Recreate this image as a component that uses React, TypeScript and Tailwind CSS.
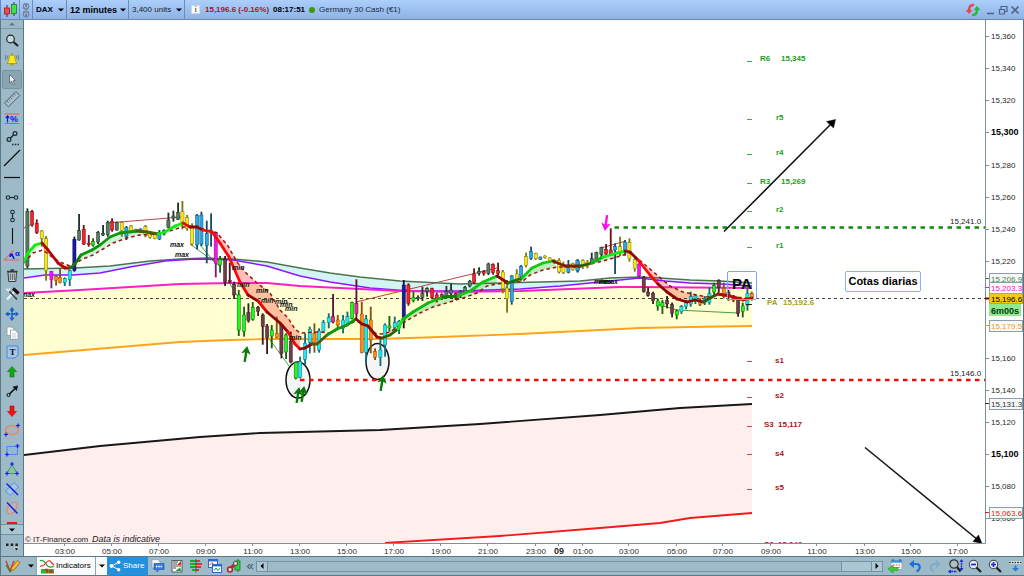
import React from "react";

type Point = [number, number];
type Candle = [number, number, number, number, number, string];

const candleColors: Record<string, { body: string; wick: string }> = {
  k: { body: "#587a62", wick: "#1d3526" },
  r: { body: "#f8202a", wick: "#6e1216" },
  y: { body: "#f4ea12", wick: "#7d7514" },
  m: { body: "#fb10f4", wick: "#7c1a76" },
  o: { body: "#ff8c12", wick: "#84500f" },
  c: { body: "#18eaf2", wick: "#126a74" },
  b: { body: "#2aa9ea", wick: "#174d6a" },
  n: { body: "#1a1aa8", wick: "#0c0c50" },
  g: { body: "#1df81d", wick: "#16620f" },
  w: { body: "#6d3d48", wick: "#3a1d24" },
  p: { body: "#d8368c", wick: "#5a1038" },
};

// Each session lists x, wick top, wick bottom, body top, body bottom in thirds of a unit from its origin.
const sessions: { origin: Point; candles: Candle[] }[] = [
  {
    origin: [20, 190],
    candles: [
      [22, 55, 235, 65, 228, "k"], [36, 60, 110, 64, 105, "r"], [50, 88, 132, 100, 128, "r"],
      [65, 120, 170, 123, 145, "y"], [78, 138, 272, 146, 242, "y"], [94, 243, 295, 245, 268, "m"],
      [108, 255, 287, 259, 272, "o"], [120, 235, 280, 262, 278, "o"], [134, 262, 288, 266, 278, "c"],
      [149, 240, 288, 242, 268, "c"], [163, 140, 245, 148, 242, "n"], [177, 72, 152, 122, 150, "k"],
      [191, 105, 165, 118, 162, "r"], [206, 135, 170, 160, 164, "r"], [219, 145, 170, 155, 165, "g"],
      [234, 123, 162, 128, 156, "k"], [249, 105, 138, 130, 135, "k"], [263, 92, 140, 98, 133, "k"],
      [276, 85, 125, 95, 120, "r"], [290, 95, 122, 98, 120, "k"], [305, 93, 140, 98, 122, "y"],
      [319, 108, 150, 112, 140, "b"], [333, 105, 130, 108, 125, "y"], [347, 116, 128, 118, 126, "y"],
      [361, 115, 128, 117, 126, "b"], [376, 105, 142, 110, 136, "y"], [390, 128, 146, 130, 142, "y"],
      [404, 128, 148, 133, 146, "y"], [418, 120, 150, 128, 147, "b"], [432, 118, 136, 122, 132, "b"],
      [445, 68, 115, 90, 112, "k"], [460, 62, 95, 78, 84, "k"], [474, 38, 90, 68, 88, "k"],
      [487, 33, 118, 65, 100, "y"], [501, 75, 122, 82, 115, "y"], [516, 100, 167, 108, 162, "y"],
      [531, 72, 178, 76, 165, "b"], [544, 65, 168, 75, 162, "b"], [560, 92, 220, 130, 166, "b"],
      [573, 70, 170, 120, 128, "b"], [587, 125, 262, 127, 220, "m"],
    ],
  },
  {
    origin: [200, 190],
    candles: [
      [60, 198, 248, 208, 225, "g"], [75, 198, 288, 208, 276, "w"], [89, 218, 280, 272, 276, "w"],
      [102, 275, 327, 283, 315, "w"], [116, 300, 438, 315, 420, "g"], [132, 350, 440, 375, 424, "g"],
      [145, 340, 398, 368, 392, "w"], [158, 336, 392, 352, 388, "g"], [174, 348, 378, 352, 364, "w"],
      [188, 370, 464, 375, 410, "w"], [201, 402, 492, 408, 442, "w"], [215, 405, 475, 420, 438, "g"],
      [230, 380, 445, 430, 442, "o"], [244, 400, 505, 404, 490, "w"], [258, 430, 507, 435, 486, "g"],
      [272, 425, 520, 455, 516, "w"], [287, 515, 568, 517, 564, "g"], [300, 500, 565, 515, 562, "c"],
      [315, 430, 524, 460, 508, "c"], [329, 410, 490, 418, 457, "c"], [343, 400, 488, 430, 464, "o"],
      [357, 415, 488, 423, 480, "c"], [370, 390, 428, 397, 424, "c"], [386, 370, 415, 383, 398, "c"],
      [399, 312, 400, 380, 396, "p"], [413, 375, 415, 390, 405, "o"], [429, 375, 430, 390, 415, "c"],
      [442, 365, 408, 380, 400, "c"], [456, 335, 388, 338, 385, "g"], [469, 268, 385, 340, 370, "p"],
      [485, 335, 490, 372, 488, "o"], [498, 375, 520, 387, 487, "c"], [512, 350, 490, 390, 450, "o"],
      [525, 475, 510, 484, 502, "o"], [541, 440, 528, 480, 502, "c"], [555, 400, 500, 405, 465, "c"],
      [568, 378, 425, 408, 414, "g"], [584, 380, 420, 398, 412, "c"],
    ],
  },
  {
    origin: [380, 210],
    candles: [
      [57, 330, 372, 334, 355, "c"], [71, 210, 355, 225, 328, "n"], [85, 220, 287, 225, 280, "r"],
      [100, 245, 277, 262, 272, "g"], [114, 256, 272, 262, 266, "k"], [127, 230, 273, 250, 262, "k"],
      [141, 232, 260, 236, 244, "k"], [156, 233, 268, 236, 262, "r"], [170, 248, 277, 255, 268, "r"],
      [185, 250, 270, 254, 264, "r"], [199, 228, 264, 244, 260, "k"], [213, 220, 264, 240, 250, "k"],
      [227, 247, 270, 250, 262, "r"], [241, 240, 264, 244, 256, "k"], [255, 228, 252, 232, 246, "k"],
      [269, 210, 232, 214, 228, "k"], [282, 175, 222, 192, 218, "r"], [297, 172, 197, 184, 190, "k"],
      [311, 180, 197, 184, 190, "r"], [325, 158, 195, 162, 190, "k"], [339, 160, 194, 164, 188, "r"],
      [354, 158, 197, 182, 190, "r"], [368, 180, 250, 186, 236, "y"], [381, 210, 308, 234, 266, "y"],
      [395, 195, 284, 198, 274, "b"], [410, 178, 217, 192, 210, "y"], [423, 165, 212, 169, 200, "b"],
      [438, 128, 172, 140, 166, "y"], [453, 110, 150, 124, 146, "b"], [467, 128, 150, 130, 146, "y"],
      [481, 140, 150, 141, 148, "b"], [495, 136, 146, 138, 143, "y"], [509, 142, 156, 144, 153, "y"],
      [523, 148, 162, 151, 158, "y"], [537, 145, 190, 151, 186, "y"], [550, 155, 192, 164, 188, "y"],
      [565, 150, 190, 165, 187, "b"], [578, 158, 182, 160, 178, "y"], [593, 148, 187, 155, 181, "b"],
    ],
  },
  {
    origin: [570, 200],
    candles: [
      [22, 178, 217, 182, 212, "b"], [38, 178, 207, 182, 200, "y"], [52, 180, 205, 186, 200, "y"],
      [65, 158, 192, 176, 188, "k"], [79, 155, 185, 158, 180, "k"], [94, 140, 177, 142, 164, "k"],
      [108, 132, 170, 148, 162, "r"], [122, 85, 168, 150, 166, "r"], [135, 130, 222, 140, 150, "b"],
      [150, 110, 168, 140, 160, "y"], [165, 120, 167, 126, 157, "b"], [178, 115, 185, 128, 176, "y"],
      [194, 175, 215, 178, 206, "y"], [207, 190, 232, 192, 228, "m"], [221, 228, 278, 232, 275, "w"],
      [234, 262, 290, 276, 286, "w"], [249, 275, 312, 280, 302, "w"], [263, 295, 332, 303, 318, "g"],
      [277, 300, 342, 308, 320, "g"], [291, 288, 325, 302, 312, "w"], [306, 308, 352, 314, 340, "w"],
      [320, 328, 358, 333, 345, "g"], [334, 315, 342, 320, 335, "c"], [348, 300, 328, 308, 320, "c"],
      [362, 275, 320, 290, 312, "c"], [376, 282, 312, 288, 302, "c"], [390, 295, 318, 300, 314, "o"],
      [404, 288, 315, 296, 308, "c"], [418, 262, 314, 280, 308, "c"], [432, 248, 290, 256, 276, "g"],
      [446, 238, 278, 242, 262, "w"], [461, 248, 295, 265, 290, "o"], [475, 270, 302, 276, 290, "w"],
      [490, 285, 306, 288, 300, "r"], [504, 295, 350, 300, 340, "w"], [518, 308, 352, 318, 334, "g"],
      [532, 262, 332, 280, 316, "c"], [545, 275, 302, 280, 296, "o"],
    ],
  },
];

const fastAverage: Point[] = [
  [24, 262], [28, 253], [35, 245], [42, 243], [48, 250], [58, 263], [65, 268], [70, 268], [75, 264], [81, 255],
  [92, 250], [100, 245], [110, 237], [120, 233], [137, 231], [147, 232], [158, 234], [165, 232], [175, 226],
  [183, 223], [190, 227], [197, 227], [203, 230], [212, 232], [220, 243], [229, 257], [240, 282], [248, 295],
  [258, 301], [267, 312], [280, 323], [288, 332], [295, 344], [300, 349], [305, 348], [312, 344], [317, 344],
  [327, 335], [337, 329], [347, 325], [356, 319], [362, 324], [368, 326], [377, 337], [382, 338], [390, 335],
  [398, 329], [403, 319], [413, 312], [428, 303], [443, 297], [458, 296], [470, 291], [483, 282], [497, 276],
  [508, 283], [522, 278], [532, 268], [543, 263], [553, 261], [565, 266], [580, 266], [592, 263], [603, 257],
  [617, 253], [625, 251], [630, 252], [638, 260], [650, 275], [658, 284], [667, 292], [677, 299], [687, 302],
  [695, 300], [703, 302], [712, 297], [718, 294], [730, 296], [737, 298], [743, 300], [752, 298],
];

const slowAverage: Point[] = [
  [24, 263], [33, 253], [43, 250], [52, 257], [60, 262], [70, 266], [83, 259], [93, 255], [103, 249], [113, 243],
  [127, 238], [140, 235], [160, 234], [173, 230], [182, 227], [193, 227], [207, 230], [217, 233], [228, 246],
  [237, 262], [245, 272], [257, 283], [270, 293], [280, 310], [288, 318], [295, 329], [300, 333], [317, 332],
  [330, 333], [347, 325], [356, 321], [368, 326], [375, 333], [382, 334], [390, 332], [403, 323], [420, 313],
  [433, 307], [453, 301], [463, 298], [477, 293], [487, 286], [497, 284], [508, 283], [523, 281], [530, 275],
  [543, 270], [557, 267], [580, 267], [590, 264], [603, 261], [617, 257], [630, 253], [643, 263], [657, 275],
  [670, 286], [683, 292], [697, 295], [707, 297], [720, 295], [752, 299],
];

// Colour of the fast average up to each x.
const averageColors: [number, string][] = [
  [42, "#10ee10"], [70, "#b00808"], [78, "#0c7a0c"], [140, "#0d960d"], [160, "#4d5a08"], [184, "#10ee10"],
  [192, "#ee0808"], [205, "#8c0606"], [248, "#fb0808"], [262, "#8c0606"], [270, "#e00808"], [286, "#8c0606"],
  [301, "#f00808"], [313, "#8c0606"], [322, "#4d5a08"], [356, "#0d960d"], [382, "#8c0606"], [399, "#2d5a08"],
  [406, "#10ee10"], [440, "#0cb80c"], [462, "#0c7a0c"], [497, "#10c810"], [513, "#8c0606"], [524, "#0c7a0c"],
  [555, "#10c810"], [580, "#7c1e06"], [592, "#2d5a08"], [608, "#0cb80c"], [627, "#10ee10"], [640, "#8c0606"],
  [662, "#fb0808"], [704, "#8c0606"], [722, "#2d5a08"], [752, "#b80808"],
];

const bands: [number, number, string][] = [
  [24, 42, "#bfeec4"], [42, 70, "#ffc9c9"], [70, 184, "#bfeec4"], [212, 302, "#ff6a5a"], [302, 322, "#ff6a5a"],
  [385, 497, "#a5e8a5"], [510, 557, "#a5e8a5"], [590, 630, "#a5e8a5"], [630, 708, "#ff6a5a"],
];

const trend: Point[] = [
  [24, 269], [75, 268], [110, 266], [150, 261], [180, 259], [206, 258], [233, 259], [267, 262], [300, 268],
  [330, 273], [360, 277], [400, 281], [420, 282], [460, 284], [500, 283], [540, 282], [580, 281], [610, 278],
  [640, 277], [660, 278], [690, 280], [720, 281], [752, 283],
];
const purple: Point[] = [
  [24, 278], [45, 275], [73, 275], [100, 273], [130, 267], [165, 261], [195, 259], [233, 260], [267, 266],
  [300, 276], [330, 282], [370, 288], [410, 291], [460, 291], [520, 289], [560, 286], [590, 283], [610, 281],
  [640, 278], [665, 281], [690, 283], [720, 284], [752, 286],
];
const magenta: Point[] = [
  [24, 293], [80, 290], [130, 287], [180, 284], [230, 283], [267, 283], [300, 286], [360, 289], [400, 291],
  [460, 292], [520, 291], [570, 289], [620, 287], [640, 287], [752, 288],
];
const orange: Point[] = [
  [24, 355], [60, 352], [120, 347], [180, 342], [230, 340], [267, 339], [380, 339], [440, 337], [520, 334],
  [580, 331], [640, 328], [690, 327], [752, 326],
];
const black: Point[] = [
  [24, 455], [100, 446], [200, 437], [260, 433], [380, 430], [480, 424], [600, 415], [680, 408], [752, 404],
];
const red: Point[] = [[385, 543], [500, 536], [600, 528], [660, 523], [690, 518], [752, 513]];

const join = (points: Point[]) => points.map((p) => p.join(",")).join(" ");
const between = (a: Point[], b: Point[]) => join([...a, ...[...b].reverse()]);
const inside = (points: Point[], from: number, to: number) => points.filter(([x]) => x >= from && x <= to);
const priceY = (price: number) => 454 - (price - 15100) * 1.6077;

const prices = [15360, 15340, 15320, 15300, 15280, 15260, 15240, 15220, 15160, 15140, 15120, 15100, 15080, 15060];
const times: [number, string][] = [
  [65, "03:00"], [112, "05:00"], [159, "07:00"], [206, "09:00"], [253, "11:00"], [300, "13:00"], [347, "15:00"],
  [394, "17:00"], [441, "19:00"], [488, "21:00"], [536, "23:00"], [559, "09"], [583, "01:00"], [629, "03:00"],
  [677, "05:00"], [723, "07:00"], [771, "09:00"], [817, "11:00"], [865, "13:00"], [911, "15:00"], [958, "17:00"],
];

const levels: { y: number; name: string; x: number; value?: string; vx?: number; up: boolean; tick: number }[] = [
  { y: 61, name: "R6", x: 760, value: "15,345", vx: 781, up: true, tick: 62 },
  { y: 120, name: "r5", x: 776, up: true, tick: 120 },
  { y: 155, name: "r4", x: 776, up: true, tick: 155 },
  { y: 184, name: "R3", x: 760, value: "15,269", vx: 781, up: true, tick: 184 },
  { y: 212, name: "r2", x: 776, up: true, tick: 212 },
  { y: 248, name: "r1", x: 776, up: true, tick: 248 },
  { y: 363, name: "s1", x: 775, up: false, tick: 362 },
  { y: 398, name: "s2", x: 775, up: false, tick: 398 },
  { y: 427, name: "S3", x: 764, value: "15,117", vx: 778, up: false, tick: 427 },
  { y: 456, name: "s4", x: 775, up: false, tick: 455 },
  { y: 490, name: "s5", x: 775, up: false, tick: 490 },
  { y: 547, name: "S6", x: 764, value: "15,042", vx: 778, up: false, tick: 546 },
];

const tags = [
  { y: 279, text: "15,206.9", color: "#4f7a4f" },
  { y: 288, text: "15,203.3", color: "#f018c8" },
  { y: 326, text: "15,179.5", color: "#f59b12" },
  { y: 404, text: "15,131.3", color: "#333333" },
  { y: 513, text: "15,063.6", color: "#f02020" },
];

const minMarks: Point[] = [[232, 270], [237, 287], [256, 293], [261, 303], [275, 304], [280, 307], [285, 311], [289, 340]];

function Mark({ x, y, color = "#0a7a0a", flip = false }: { x: number; y: number; color?: string; flip?: boolean }) {
  return (
    <g transform={`translate(${x} ${y}) rotate(${flip ? 188 : 9})`} stroke={color} fill={color}>
      <path d="M0 3V15" strokeWidth="2.4" />
      <path d="M0 0L-3.6 6L0 4.6L3.6 6Z" strokeWidth="1" />
    </g>
  );
}

function Chart() {
  return (
    <svg viewBox="24 20 1000 536" className="block h-full w-full" role="img" aria-label="DAX 12 minutes chart" fontFamily="'Liberation Sans', Arial, sans-serif">
      <defs>
        <clipPath id="plot"><rect x="24" y="20" width="961" height="523" /></clipPath>
      </defs>
      <rect x="24" y="20" width="1000" height="536" fill="#fff" />
      <g clipPath="url(#plot)">
        <polygon points={between(magenta, orange)} fill="#ffffd2" />
        <polygon points={between(trend, purple)} fill="#d3f4f4" />
        <polygon points={between(black, [[24, 543], ...red])} fill="#ffeeee" />
        {bands.map(([from, to, fill]) => (
          <polygon key={from} points={between(inside(fastAverage, from, to), inside(slowAverage, from, to))} fill={fill} fillOpacity={fill === "#ff6a5a" ? 0.42 : 0.75} />
        ))}
        <path d="M24 298.5H985" stroke="#444" strokeDasharray="3 3" strokeWidth="1" />
        <g fill="none">
          <path d="M24 228L30 225M107 223L182 217M356 302L497 268M601 248L626 241" stroke="#b53030" strokeWidth=".9" />
          <path d="M190 244L220 266M200 245L217 265M230 284L240 300M267 336L298 378M658 304L676 310L738 313" stroke="#2a9a2a" strokeWidth=".9" />
          <polyline points={join(trend)} stroke="#4c744c" strokeWidth="1.5" />
          <polyline points={join(purple)} stroke="#8d16ff" strokeWidth="1.6" />
          <polyline points={join(magenta)} stroke="#fb1fc4" strokeWidth="1.8" />
          <polyline points={join(orange)} stroke="#ffa31a" strokeWidth="1.8" />
          <polyline points={join(black)} stroke="#181818" strokeWidth="1.8" />
          <polyline points={join(red)} stroke="#f21a1a" strokeWidth="1.8" />
        </g>
        <g fill="#f5f5f5" stroke="#111" strokeWidth="1.5">
          <ellipse cx="298" cy="380" rx="12" ry="18" />
          <ellipse cx="377.5" cy="361.5" rx="11.5" ry="18" />
        </g>
        {sessions.map(({ origin: [ox, oy], candles }) => (
          <g key={ox} transform={`translate(${ox} ${oy}) scale(${1 / 3})`}>
            {candles.map(([x, top, bottom, open, close, color]) => (
              <g key={x}>
                <rect x={x - 2.5} y={top} width="5.5" height={bottom - top} fill={candleColors[color].wick} />
                <rect x={x - 4.5} y={open} width="9.5" height={close - open} fill={candleColors[color].body} stroke={candleColors[color].wick} strokeWidth="1.5" />
              </g>
            ))}
          </g>
        ))}
        <polyline points={join(slowAverage)} fill="none" stroke="#9c1414" strokeWidth="1.5" strokeDasharray="3.5 3" />
        <g strokeWidth="2.8" strokeLinecap="round">
          {fastAverage.slice(1).map(([x, y], i) => {
            const [px, py] = fastAverage[i];
            const hit = averageColors.find(([end]) => (x + px) / 2 <= end);
            return <line key={x} x1={px} y1={py} x2={x} y2={y} stroke={hit ? hit[1] : "#b80808"} />;
          })}
        </g>
        <path d="M614.5 227.5H985" stroke="#128a12" strokeWidth="2.4" strokeDasharray="4.5 4.5" />
        <path d="M300 380H985" stroke="#f00c0c" strokeWidth="2.4" strokeDasharray="4.5 4.5" />
        <Mark x={247} y={347} />
        <Mark x={299} y={388} />
        <Mark x={304} y={387} />
        <Mark x={383} y={376} />
        <Mark x={605} y={230} color="#fb10e8" flip />
        <g fontSize="7" fontWeight="700" fontStyle="italic" fill="#111">
          {minMarks.map(([x, y]) => <text key={`${x}-${y}`} x={x} y={y}>min</text>)}
          <text x="170" y="247">max</text>
          <text x="175" y="257">max</text>
          <text x="21" y="297">max</text>
          <text x="594" y="284">min</text>
          <text x="599" y="284">max</text>
          <text x="604" y="284">max</text>
        </g>
        <g fontSize="8" fontWeight="700">
          {levels.map(({ y, name, x, value, vx, up, tick }) => (
            <g key={name} fill={up ? "#22a022" : "#a81818"}>
              <text x={x} y={y}>{name}</text>
              {value && <text x={vx} y={y}>{value}</text>}
              <path d={`M747 ${tick - 0.5}H752`} stroke={up ? "#3fae4f" : "#c05050"} strokeWidth="1" />
            </g>
          ))}
          <text x="767" y="305" fill="#a8a012">PA</text>
          <text x="783" y="305" fill="#a8a012">15,192.6</text>
        </g>
        <rect x="727.5" y="271.5" width="29" height="28" rx="1.5" fill="none" stroke="#7da5ff" />
        <text x="732" y="289" fontSize="15" fontWeight="700" fill="#000">PA</text>
        <path d="M746 304.5H752" stroke="#222" />
        <rect x="845.5" y="271.5" width="75" height="20" rx="1.5" fill="#fff" stroke="#8aaeff" />
        <text x="883" y="285" fontSize="11" fontWeight="700" textAnchor="middle" fill="#000">Cotas diarias</text>
        <g stroke="#111" strokeWidth="1.5" fill="#000">
          <path d="M724 231.5L832 123" />
          <path d="M835.5 119.5L826.5 121.5L833.5 128Z" strokeWidth=".5" />
          <path d="M865 447.5L978 540" />
          <path d="M982 543.5L978.5 535L973 541.5Z" strokeWidth=".5" />
        </g>
        <g fontSize="8" fill="#222">
          <text x="950" y="224">15,241.0</text>
          <text x="950" y="376">15,146.0</text>
          <text x="25" y="542">© IT-Finance.com</text>
          <text x="92" y="542" fontSize="9" fontStyle="italic">Data is indicative</text>
        </g>
      </g>
      <path d="M985.5 20V543.5H24" fill="none" stroke="#7d929c" />
      <g fontSize="8" fill="#2a2a2a">
        {prices.map((price) => {
          const y = Math.round(priceY(price));
          const strong = price % 100 === 0;
          return (
            <g key={price}>
              <path d={`M985 ${y + 0.5}H989`} stroke="#7d929c" />
              <text x="991" y={y + 3} fontSize={strong ? 9 : 8} fontWeight={strong ? 700 : 400} fill={strong ? "#000" : "#2a2a2a"}>
                {price.toLocaleString("en-US")}
              </text>
            </g>
          );
        })}
        {times.map(([x, label]) => (
          <g key={x}>
            <path d={`M${x - 0.5} 543V546`} stroke="#7d929c" />
            <text x={x} y="554" textAnchor="middle" fontWeight={label === "09" ? 700 : 400} fontSize={label === "09" ? 9 : 8}>{label}</text>
          </g>
        ))}
        {tags.map(({ y, text, color }) => (
          <g key={text}>
            <path d={`M985 ${y - 0.5}H989`} stroke={color} />
            <rect x="989.5" y={y - 5.5} width="33" height="11" fill="#f6f8f8" stroke="#8c9ea6" />
            <text x="991" y={y + 3} fill={color}>{text}</text>
          </g>
        ))}
        <path d="M985 298.5H989" stroke="#700" strokeWidth="2" />
        <rect x="989.5" y="293.5" width="33" height="10" fill="#f7c61a" stroke="#d6a514" />
        <text x="991" y="302" fill="#000">15,196.6</text>
        <rect x="989" y="304" width="32" height="12" fill="#8fe98f" />
        <text x="991" y="314" fontSize="9" fontWeight="700" fill="#0c3a0c">6m00s</text>
      </g>
      <path d="M1023.5 20V556" stroke="#56707e" />
    </svg>
  );
}

function Plus({ x, y }: { x: number; y: number }) {
  return <path d={`M${x - 2} ${y}H${x + 2}M${x} ${y - 2}V${y + 2}`} stroke="#1a1af0" strokeWidth="1.2" />;
}

const ink = "#1c2a32";
const tools: { name: string; icon: React.ReactNode }[] = [
  { name: "Zoom", icon: <><circle cx="6.5" cy="6" r="3.8" stroke="#222" strokeWidth="1.2" fill="#c4d8e0" /><path d="M9.5 9L14 13" stroke="#222" strokeWidth="2.2" /></> },
  { name: "Alerts", icon: <><path d="M8 3C5 3 5 6 4.8 8.5L3 11.5H13L11.2 8.5C11 6 11 3 8 3Z" fill="#ffe81c" stroke="#a58a08" strokeWidth=".7" /><path d="M6.5 12.5H9.5" stroke="#c09a08" strokeWidth="2" /><path d="M8 1.5V3" stroke="#a58a08" strokeWidth="1.5" /><path d="M2 3Q.5 5.5 1.8 8M14 3Q15.5 5.5 14.2 8M4 3.5Q2.6 5 3.5 7M12 3.5Q13.4 5 12.5 7" stroke="#5b6f7a" strokeWidth=".8" /></> },
  { name: "Select", icon: <path d="M5.5 2.5L5.5 11L7.6 9.2L9 12.8L10.5 12.2L9.1 8.8L11.6 8.5Z" fill="#e8eef2" stroke="#5d6f78" strokeWidth=".9" /> },
  { name: "Ruler", icon: <g transform="rotate(-45 8 8)"><rect x="0" y="5.5" width="16" height="5.5" fill="#a9bfca" stroke="#4d606a" strokeWidth=".9" /><path d="M3 5.5V8M5.5 5.5V7.5M8 5.5V8M10.5 5.5V7.5M13 5.5V8" stroke="#4d606a" strokeWidth=".8" /></g> },
  { name: "Percent", icon: <><path d="M.5 3H15.500M.5 12.500H15.5" stroke="#ff5050" strokeWidth="1" /><path d="M3.5 11.5V5.500M1.8 7L3.5 5L5.2 7" stroke="#1515ee" strokeWidth="1.2" /><text x="6" y="11" fontSize="9" fontWeight="700" fill="#1515ee" fontFamily="'Liberation Sans', sans-serif">%</text></> },
  { name: "Segment", icon: <><circle cx="5" cy="9.5" r="1.9" stroke={ink} strokeWidth="1.2" /><circle cx="11" cy="3.5" r="1.9" stroke={ink} strokeWidth="1.2" /><path d="M6.4 8.1L9.6 4.9" stroke={ink} strokeWidth="1.4" /><path d="M8 14.5H15" stroke={ink} strokeWidth="1.3" strokeDasharray="1.5 1.3" /></> },
  { name: "Line", icon: <path d="M0 16L16 0" stroke="#111" strokeWidth="1.2" /> },
  { name: "Horizontal line", icon: <path d="M0 8.5H16" stroke="#111" strokeWidth="1.2" /> },
  { name: "Horizontal segment", icon: <><circle cx="4" cy="8.5" r="1.8" stroke={ink} strokeWidth="1.1" /><circle cx="12" cy="8.5" r="1.8" stroke={ink} strokeWidth="1.1" /><path d="M6 8.5H10" stroke={ink} strokeWidth="1.2" /></> },
  { name: "Vertical segment", icon: <><circle cx="8.5" cy="4" r="1.8" stroke={ink} strokeWidth="1.1" /><circle cx="8.5" cy="12" r="1.8" stroke={ink} strokeWidth="1.1" /><path d="M8.5 6V10" stroke={ink} strokeWidth="1.2" /></> },
  { name: "Vertical line", icon: <path d="M8.5 0V16" stroke="#111" strokeWidth="1.1" /> },
  { name: "Angle", icon: <><path d="M9.5 3L.5 13H15.5" stroke="#f06060" strokeWidth="1.1" /><path d="M6.5 7.5Q9.500 8.500 10 12M6.200 7.300H9M6.200 7.300V10" stroke="#1515ee" strokeWidth="1.5" /><text x="11" y="9" fontSize="8" fontWeight="700" fill="#1515ee" fontFamily="'Liberation Sans', sans-serif">α</text></> },
  { name: "Delete", icon: <><path d="M4 5H12.5L11.8 14.5H4.7Z" fill="#c7d3d9" stroke="#323d43" /><path d="M3 4.5H13.500M6.5 3H10" stroke="#323d43" strokeWidth="1.3" /><path d="M6.3 6.5V13M8.3 6.5V13M10.3 6.5V13" stroke="#323d43" strokeWidth=".8" /></> },
  { name: "Settings", icon: <><path d="M3 13.5L11.5 4.5" stroke="#eef2f4" strokeWidth="2.4" /><path d="M4 4L13 13.5" stroke="#3b454b" strokeWidth="1.7" /><path d="M9 2.5L14.5 7.5" stroke="#111" strokeWidth="3.4" /><path d="M2 2.5L4.5 5L6 2.5" stroke="#e8edf0" strokeWidth="1.6" /></> },
  { name: "Move", icon: <><path d="M8 4V12M4 8H12" stroke="#1560c8" strokeWidth="2" strokeDasharray="2 .6" /><path d="M8 1L10.6 4.500H5.4ZM8 15L5.4 11.500H10.6ZM1 8L4.500 5.4V10.6ZM15 8L11.500 10.6V5.4Z" fill="#1560c8" /></> },
  { name: "Copy", icon: <><path d="M3 2H8L10 4V10.5H3Z" fill="#fff" stroke="#8999a2" strokeWidth=".8" /><path d="M6.5 5H11L14 8V14.5H6.5Z" fill="#fff" stroke="#8999a2" strokeWidth=".8" /><path d="M8 9H12M8 11H12M8 13H12" stroke="#aab6bd" strokeWidth=".7" /></> },
  { name: "Text", icon: <><path d="M3 2H14V11L11 14H3Z" fill="#a5c8e8" stroke="#4a86ea" /><text x="8.5" y="11" textAnchor="middle" fontSize="9" fontWeight="700" fill="#111" fontFamily="'Liberation Serif', serif">T</text></> },
  { name: "Up arrow", icon: <path d="M8 2.5L12.5 7.5H10V13H6V7.5H3.500Z" fill="#12a812" stroke="#0b770b" strokeWidth=".6" /> },
  { name: "Arrow", icon: <><circle cx="4.5" cy="12" r="1.6" stroke="#111" /><path d="M5.5 11L11 5.5" stroke="#111" strokeWidth="1.6" /><path d="M14 2.5L12.8 8L8.5 3.8Z" fill="#111" /></> },
  { name: "Down arrow", icon: <path d="M8 13.5L12.5 8.5H10V3H6V8.5H3.500Z" fill="#f51212" stroke="#b00c0c" strokeWidth=".6" /> },
  { name: "Ellipse", icon: <><ellipse cx="8" cy="8" rx="6.5" ry="4.5" fill="#adb3b4" stroke="#ee8055" strokeWidth="1.2" /><Plus x={14} y={3.5} /><Plus x={2} y={12.5} /></> },
  { name: "Rectangle", icon: <><rect x="3" y="4.5" width="10.5" height="8" fill="#92b9da" stroke="#4b85ef" /><Plus x={13.5} y={4} /><Plus x={3} y={12.5} /></> },
  { name: "Triangle", icon: <><path d="M8 3.5L13 12.5H3Z" fill="#96bcaf" stroke="#2fa552" /><Plus x={8} y={3} /><Plus x={3} y={12.5} /><Plus x={13} y={12.5} /></> },
  { name: "Parallel", icon: <><path d="M10 1.500L14.500 6L10 10.500L5.500 6ZM6 5.500L10.500 10L6 14.500L1.500 10Z" stroke="#4b85ef" strokeWidth=".9" fill="#a5c6df" /><path d="M2.5 2.5L14 14" stroke="#1a1af0" strokeWidth="1.4" /></> },
  { name: "Cycle", icon: <><ellipse cx="8" cy="8" rx="4" ry="6.5" transform="rotate(35 8 8)" stroke="#ee8055" fill="#b1b8bb" /><path d="M3 2.5L13.5 13.5" stroke="#1a1af0" strokeWidth="1.5" /></> },
];

function Caret({ up = false }: { up?: boolean }) {
  return (
    <svg viewBox="0 0 6 4" className="pointer-events-none h-1 w-1.5 shrink-0" aria-hidden="true">
      <path d={up ? "M0 3.5L3 .5L6 3.5Z" : "M0 .5H6L3 3.5Z"} fill={up ? "#64747d" : "#000"} />
    </svg>
  );
}

function Picker({ label, value, className }: { label: string; value: string; className: string }) {
  return (
    <label className={`relative flex h-full items-center border-r border-[#6a8dbb] ${className}`}>
      <span className="sr-only">{label}</span>
      <select className="h-full w-full appearance-none bg-transparent pl-[3px] leading-4 outline-none" defaultValue={value}>
        <option>{value}</option>
      </select>
      <span className="pointer-events-none absolute inset-y-0 right-[2px] flex items-center"><Caret /></span>
    </label>
  );
}

function IconButton({ name, className = "w-5", children }: { name: string; className?: string; children: React.ReactNode }) {
  return (
    <button type="button" aria-label={name} className={`flex h-full shrink-0 items-center justify-center ${className}`}>
      <svg viewBox="0 0 16 16" className="h-4 w-4 shrink-0 overflow-visible" fill="none" aria-hidden="true">{children}</svg>
    </button>
  );
}

function TopBar() {
  return (
    <header className="flex h-5 shrink-0 items-center border-b border-l border-[#6688b5] bg-linear-to-b from-[#abcefa] to-[#8fb3e6] whitespace-nowrap">
      <IconButton name="Chart type" className="w-[19px] border-r border-[#6a8dbb]">
        <path d="M5 3V15M12 0V14" stroke="#333" />
        <rect x="2.5" y="6" width="5" height="6" fill="#f04a50" stroke="#a01a20" strokeWidth=".8" />
        <rect x="9.5" y="2.5" width="5" height="9" fill="#3fe04a" stroke="#16801c" strokeWidth=".8" />
      </IconButton>
      <IconButton name="Links" className="w-[13px] border-r border-[#6a8dbb]">
        <circle cx="8" cy="4.5" r="3.4" fill="#7186a4" /><circle cx="8" cy="12" r="3.4" fill="#7186a4" />
        <path d="M6.5 3V5Q8 7 9.5 5V3M6.5 13.5V11.5Q8 9.5 9.5 11.5V13.5" stroke="#b9cbe4" strokeWidth=".8" />
      </IconButton>
      <Picker label="Instrument" value="DAX" className="w-[34px] font-bold" />
      <Picker label="Timeframe" value="12 minutes" className="w-[62px] text-[9px] font-bold" />
      <Picker label="History" value="3,400 units" className="w-[56px] text-[#222]" />
      <button type="button" aria-label="Information" className="ml-[6px] flex h-[9px] w-[9px] items-center justify-center border border-gray-300 bg-white font-['Liberation_Serif',serif] font-bold text-gray-500">i</button>
      <div className="ml-[5px] flex items-center">
        <span className="font-bold text-[#b01018]">15,196.6 (-0.16%)</span>
        <span className="ml-1 font-bold">08:17:51</span>
        <span className="mx-1 h-1.5 w-1.5 rounded-full bg-[#3a9a0c]" />
        <span className="text-[#1c2a40]">Germany 30 Cash (€1)</span>
      </div>
      <div className="ml-auto flex h-full items-center pr-[3px]">
        <IconButton name="Refresh" className="mr-[3px] w-4">
          <path d="M9 3Q4 2.500 4 8.500" stroke="#e8474e" strokeWidth="2.600" /><path d="M.5 8H7.500L4 12Z" fill="#e8474e" />
          <path d="M7 13Q12 13.500 12 7.500" stroke="#2cb83a" strokeWidth="2.600" /><path d="M8.500 8H15.500L12 4Z" fill="#2cb83a" />
        </IconButton>
        <IconButton name="Minimize" className="w-[13px]"><path d="M4 11.5H11" stroke="#4d6584" strokeWidth="1.6" /></IconButton>
        <IconButton name="Restore" className="w-3"><path d="M6 7V4.5H12V9.5H10M4.5 7.5H9.5V12H4.5Z" stroke="#4d6584" strokeWidth="1.2" /></IconButton>
        <IconButton name="Close" className="w-3"><path d="M4.500 4.500L11.5 11.500M11.5 4.500L4.500 11.5" stroke="#4d6584" strokeWidth="1.6" /></IconButton>
      </div>
    </header>
  );
}

function ToolRail() {
  return (
    <nav aria-label="Drawing tools" className="flex w-6 shrink-0 flex-col border-r border-l border-[#5e7785] bg-[#9cbac8]">
      <button type="button" aria-label="Scroll up" className="flex h-[9px] shrink-0 items-center justify-center border-b border-[#7e98a5]"><Caret up /></button>
      <div className="flex min-h-0 flex-1 flex-col items-center pt-0.5">
        {tools.map(({ name, icon }) => (
          <button
            key={name}
            type="button"
            aria-label={name}
            className={`flex min-h-0 w-5 flex-1 items-center justify-center rounded-xs border ${name === "Select" ? "border-[#7b929e] bg-[#8aa4b1]" : "border-transparent"}`}
          >
            <svg viewBox="0 0 16 16" className="h-4 w-4 shrink-0 overflow-visible" fill="none" aria-hidden="true">{icon}</svg>
          </button>
        ))}
      </div>
      <div className="mx-1.5 mt-1 h-0.5 shrink-0 bg-[#f01414]" />
      <button type="button" aria-label="Scroll down" className="flex h-[11px] shrink-0 items-center justify-center border-y border-[#7490a0] bg-[#a9c6d3]"><Caret /></button>
      <button type="button" aria-label="More tools" className="flex h-[21px] shrink-0 items-center justify-center">
        <svg viewBox="0 0 16 16" className="h-4 w-4" aria-hidden="true">
          <path d="M2 5.5H4.5V8H2ZM6.7 5.5H9.2V8H6.7ZM11.4 5.5H13.9V8H11.4Z" fill="#222" />
          <path d="M10 10H15L12.5 13Z" fill="#000" stroke="#fff" strokeWidth=".6" />
        </svg>
      </button>
    </nav>
  );
}

function BottomBar() {
  return (
    <footer className="flex h-5 shrink-0 items-center border-t border-b border-l border-[#5e7785] bg-[#9cbac8] whitespace-nowrap">
      <IconButton name="Draw" className="w-6">
        <path d="M1 3L5 13L9 3" stroke="#c04838" strokeWidth="1.5" /><path d="M1 7L5 13.5L8 10" stroke="#38843a" strokeWidth="1.2" />
        <path d="M5.5 13L7 9L12.5 2.5L15 4.5L9.5 11.5Z" fill="#ffb82c" stroke="#8a6110" strokeWidth=".8" />
      </IconButton>
      <button type="button" aria-label="Draw options" className="flex h-full w-[11px] items-center justify-center"><Caret /></button>
      <button type="button" className="flex h-full w-[60px] items-center gap-px border-x border-[#8fa5b0] bg-[#f8fafb] pl-[2px] leading-3">
        <svg viewBox="0 0 16 16" className="h-4 w-4 shrink-0" fill="none" aria-hidden="true">
          <path d="M1 3Q4 1 7 6T15 8" stroke="#28a436" strokeWidth="1.3" /><path d="M1 8Q4 9 7 5T12 4L15 7" stroke="#e23232" strokeWidth="1.2" />
          <path d="M2 11H15V15.5H2Z" fill="#1ebc28" /><path d="M6 11.5H8V15M11 15V13H13V15" stroke="#d62020" strokeWidth="1.5" />
        </svg>
        Indicators
      </button>
      <button type="button" aria-label="Indicator options" className="flex h-full w-[11px] items-center justify-center bg-[#f8fafb]"><Caret /></button>
      <button type="button" className="flex h-full w-[41px] items-center gap-[2px] bg-[#2590dc] pl-[2px] leading-3 text-white">
        <svg viewBox="0 0 12 12" className="h-3 w-3 shrink-0" aria-hidden="true">
          <path d="M10 2L3 6L10 10" fill="none" stroke="#fff" /><circle cx="2.5" cy="6" r="1.9" fill="#fff" /><circle cx="9.7" cy="2.2" r="1.7" fill="#fff" /><circle cx="9.7" cy="9.8" r="1.7" fill="#fff" />
        </svg>
        Share
      </button>
      <IconButton name="Messages">
        <path d="M2 1.5H8L10 3.5V10H2Z" fill="#eef3f7" stroke="#7f9dc0" strokeWidth=".7" />
        <path d="M4 5.5H14V11.5H9L7 14V11.5H4Z" fill="#3d7ae0" stroke="#2455b0" strokeWidth=".7" /><path d="M6 8.5H12" stroke="#fff" strokeWidth="1.5" strokeDasharray="1.5 .8" />
      </IconButton>
      <IconButton name="Orders" className="w-[18px]">
        <rect x="3" y="2.5" width="10" height="11.5" fill="#f4f4f4" stroke="#444" strokeWidth=".8" /><path d="M4 4H9M4 6H8M4 8H12M4 10H7" stroke="#555" /><path d="M8 7L12 3V7Z" fill="#e02828" /><path d="M7 12.5L11 9.5L12.5 13H7Z" fill="#24a42c" />
      </IconButton>
      <IconButton name="Order book">
        <path d="M2 3H8M2 6H8M2 9H8M4 12H8" stroke="#18ac22" strokeWidth="2.2" /><path d="M8 3H12M8 6H14M8 9H13M8 12H11" stroke="#dd3434" strokeWidth="2.2" /><path d="M8 1V14.5" stroke="#444" strokeWidth=".7" />
      </IconButton>
      <IconButton name="Windows" className="w-[18px]">
        <rect x="1.5" y="1.5" width="9" height="8" fill="#fff" stroke="#2869c8" /><path d="M1 2.5H11" stroke="#2869c8" strokeWidth="1.8" /><path d="M2.5 7L5 4.5L7 7" stroke="#e03838" />
        <rect x="5.5" y="6.5" width="9" height="8" fill="#fff" stroke="#2869c8" /><path d="M5 7.5H15" stroke="#2869c8" strokeWidth="1.8" /><path d="M7 12.5L9 10L11 12.5L13 10" stroke="#1f9c30" />
      </IconButton>
      <IconButton name="Trading setup">
        <path d="M12 1V14" stroke="#266" /><rect x="9" y="3" width="5" height="9" fill="#2ed83c" stroke="#167a1d" strokeWidth=".8" />
        <path d="M3 12L9 6" stroke="#c22a32" strokeWidth="3.2" /><circle cx="9.500" cy="5.5" r="2" stroke="#555" strokeWidth="1.2" fill="#f4f4f4" /><circle cx="4" cy="11.500" r="2.4" fill="#f4f4f4" stroke="#b1282f" strokeWidth="1.600" />
      </IconButton>
      <button type="button" className="w-3 text-[13px] leading-4 text-[#40535e]">«</button>
      <div className="flex h-[11px] min-w-0 flex-1 items-center border border-[#7892a0] bg-[#93b1bf]">
        <button type="button" aria-label="Scroll left" className="flex h-full w-[11px] shrink-0 items-center justify-center border-r border-[#7892a0] bg-[#acc9d5]">
          <svg viewBox="0 0 4 6" className="h-1.5 w-1" aria-hidden="true"><path d="M3.5 0V6L.5 3Z" /></svg>
        </button>
        <input
          type="range"
          aria-label="Chart position"
          defaultValue={100}
          className="h-full min-w-0 flex-1 appearance-none bg-[#9cbac8] [&::-webkit-slider-thumb]:h-[9px] [&::-webkit-slider-thumb]:w-[30px] [&::-webkit-slider-thumb]:appearance-none [&::-webkit-slider-thumb]:border-l [&::-webkit-slider-thumb]:border-[#7892a0] [&::-webkit-slider-thumb]:bg-[#a9c6d3]"
        />
        <button type="button" aria-label="Scroll right" className="flex h-full w-[11px] shrink-0 items-center justify-center border-l border-[#7892a0] bg-[#acc9d5]">
          <svg viewBox="0 0 4 6" className="h-1.5 w-1" aria-hidden="true"><path d="M.5 0V6L3.5 3Z" /></svg>
        </button>
      </div>
      <div className="ml-0.5 flex h-full items-center">
        <IconButton name="Calendar">
          <rect x="4" y="2.5" width="11" height="9" fill="#f6f9fb" stroke="#8aa6b8" strokeWidth=".8" /><path d="M4 3.5H15" stroke="#3d93d5" strokeWidth="2.4" /><path d="M6 7H14M6 9.5H14" stroke="#d35a5a" strokeDasharray="1.5 1.2" /><path d="M6 1V3M13 1V3" stroke="#446" />
          <path d="M1 11L6 7V9.5H11V12.5H6V15Z" fill="#3ecb36" stroke="#249a20" strokeWidth=".6" />
        </IconButton>
        <IconButton name="Undo"><path d="M6 6H10Q13.5 7 12.5 10.5Q12 12.5 9.5 13.5" stroke="#1b6de0" strokeWidth="2.2" /><path d="M2 6L7 2V10Z" fill="#1b6de0" /></IconButton>
        <IconButton name="Redo"><path d="M10 6H7Q3 7 4 10.5Q4.5 12.5 6.5 13.5" stroke="#7faccb" strokeWidth="2.2" /><path d="M14 6L9 2V10Z" fill="#7faccb" /></IconButton>
        <IconButton name="Fit chart">
          <path d="M1.500 13.500H10M14.500 2V12" stroke="#1d27d8" strokeWidth="1.400" strokeDasharray="2 .7" /><path d="M12.700 4L14.500 1L16.300 4ZM12.700 10L14.500 13L16.300 10ZM4 11.500L1 13.500L4 15.500Z" fill="#1d27d8" />
          <circle cx="7" cy="6" r="4.200" fill="#aebfc7" stroke="#333" strokeWidth="1.2" /><path d="M10 9L13.500 13.5" stroke="#222" strokeWidth="2.2" />
        </IconButton>
        <IconButton name="Zoom out"><circle cx="6.5" cy="6.5" r="4.2" fill="#e7eef2" stroke="#444" strokeWidth="1.1" /><path d="M9.5 9.5L14 14" stroke="#222" strokeWidth="2.2" /><path d="M4 6.5H9" stroke="#1d27d8" strokeWidth="1.7" /></IconButton>
        <IconButton name="Zoom in"><circle cx="6.5" cy="6.5" r="4.2" fill="#e7eef2" stroke="#444" strokeWidth="1.1" /><path d="M9.5 9.5L14 14" stroke="#222" strokeWidth="2.2" /><path d="M4 6.5H9M6.5 4V9" stroke="#1d27d8" strokeWidth="1.7" /></IconButton>
        <IconButton name="Dock" className="w-[19px]"><path d="M2 3H15V6H2Z" fill="#eef3f5" /><path d="M2 4.5H15" stroke="#333" strokeWidth="1.5" strokeDasharray="1.8 .9" /><path d="M7.5 7.5H9.5V10H12L8.5 13.5L5 10H7.5Z" fill="#2a78d8" /></IconButton>
      </div>
    </footer>
  );
}

export default function App() {
  return (
    <div className="flex h-screen flex-col overflow-hidden bg-white font-['Liberation_Sans',Arial,sans-serif] text-[8px] leading-none text-black">
      <TopBar />
      <main className="flex min-h-0 flex-1">
        <ToolRail />
        <div className="min-w-0 flex-1"><Chart /></div>
      </main>
      <BottomBar />
    </div>
  );
}
